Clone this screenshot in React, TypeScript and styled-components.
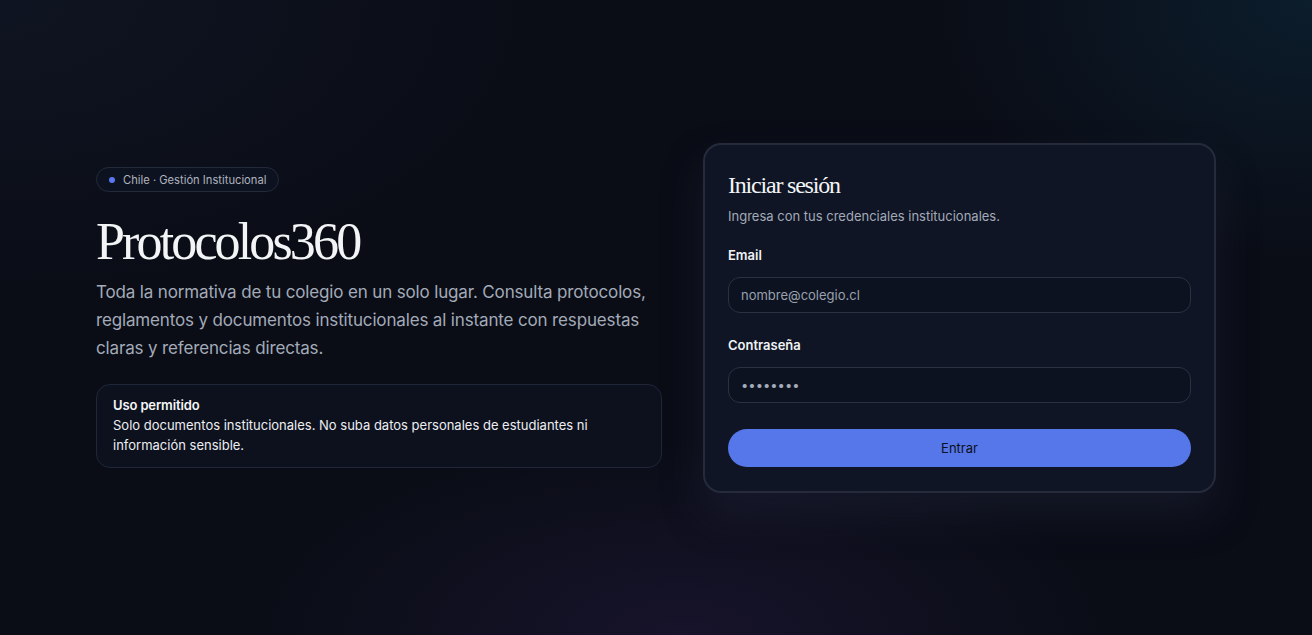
import React from "react";
import styled, { createGlobalStyle } from "styled-components";

const Global = createGlobalStyle`
  * { box-sizing: border-box; }
  html, body { margin: 0; padding: 0; }
  body {
    font-family: Inter, "Noto Sans", "Liberation Sans", sans-serif;
    background: #0a0d16;
    color: #e5e7eb;
  }
`;

const Page = styled.main`
  min-height: 100vh;
  display: flex;
  align-items: center;
  justify-content: center;
  padding: 0 96px;
  background:
    radial-gradient(ellipse 520px 360px at 100% 0%, rgba(12, 34, 50, 0.75), transparent 72%),
    radial-gradient(ellipse 560px 260px at 52% 100%, rgba(26, 21, 48, 0.8), transparent 75%),
    radial-gradient(ellipse 760px 420px at 0% 0%, rgba(18, 24, 40, 0.65), transparent 70%),
    #0a0d16;
`;

const Layout = styled.div`
  width: 100%;
  max-width: 1120px;
  display: grid;
  grid-template-columns: 566px 1fr;
  gap: 41px;
  align-items: center;
`;

const Intro = styled.section`
  display: flex;
  flex-direction: column;
  align-items: flex-start;
`;

const Badge = styled.span`
  display: inline-flex;
  align-items: center;
  gap: 8px;
  height: 25px;
  padding: 0 12px;
  border: 1px solid #232a3a;
  border-radius: 999px;
  background: #0d1220;
  font-size: 11.2px;
  color: #aeb3be;
`;

const Dot = styled.span`
  width: 6px;
  height: 6px;
  border-radius: 50%;
  background: #5a78ee;
`;

const Title = styled.h1`
  margin: 20px 0 0;
  font-family: "Liberation Serif", "DejaVu Serif", serif;
  font-weight: 400;
  font-size: 52px;
  line-height: 60px;
  letter-spacing: -0.055em;
  color: #f3f4f6;
`;

const Lead = styled.p`
  margin: 6px 0 0;
  font-size: 17px;
  line-height: 28px;
  letter-spacing: -0.15px;
  color: #a3aab8;
  max-width: 566px;
`;

const Notice = styled.div`
  margin-top: 22px;
  width: 100%;
  padding: 10px 16px 12px;
  border: 1px solid #20273a;
  border-radius: 14px;
  background: #0d111d;
  font-size: 13px;
  line-height: 20px;
  color: #eceef2;
`;

const NoticeTitle = styled.div`
  font-weight: 600;
  letter-spacing: -0.01em;
  color: #f5f6f8;
`;

const Card = styled.section`
  padding: 25px 23px 24px;
  border: 2px solid #252b3b;
  border-radius: 18px;
  background: #0f1524;
  box-shadow: 0 22px 40px rgba(40, 44, 70, 0.35);
  display: flex;
  flex-direction: column;
`;

const CardTitle = styled.h2`
  margin: 0;
  font-family: "Liberation Serif", "DejaVu Serif", serif;
  font-weight: 400;
  font-size: 24px;
  line-height: 30px;
  letter-spacing: -0.05em;
  color: #f3f4f6;
`;

const CardSub = styled.p`
  margin: 6px 0 0;
  font-size: 13px;
  line-height: 20px;
  color: #a3aab8;
`;

const Field = styled.label<{ $top: number }>`
  display: flex;
  flex-direction: column;
  gap: 12px;
  margin-top: ${(p) => p.$top}px;
`;

const Label = styled.span`
  font-size: 13px;
  line-height: 20px;
  font-weight: 600;
  color: #f1f2f5;
`;

const Input = styled.input`
  height: 36px;
  width: 100%;
  padding: 0 12px;
  border: 1px solid #2a3142;
  border-radius: 12px;
  background: #0d1220;
  font-family: inherit;
  font-size: 13px;
  color: #a3aab8;
  outline: none;
  &::placeholder { color: #9aa1ae; }
`;

const Submit = styled.button`
  margin-top: 26px;
  height: 38px;
  width: 100%;
  border: none;
  border-radius: 999px;
  background: #5577e9;
  font-family: inherit;
  font-size: 13px;
  color: #0c1020;
  cursor: pointer;
`;

export default function App() {
  return (
    <>
      <Global />
      <Page>
        <Layout>
          <Intro>
            <Badge>
              <Dot />
              Chile · Gestión Institucional
            </Badge>
            <Title>Protocolos360</Title>
            <Lead>
              Toda la normativa de tu colegio en un solo lugar. Consulta protocolos,
              reglamentos y documentos institucionales al instante con respuestas
              claras y referencias directas.
            </Lead>
            <Notice>
              <NoticeTitle>Uso permitido</NoticeTitle>
              Solo documentos institucionales. No suba datos personales de estudiantes ni
              información sensible.
            </Notice>
          </Intro>
          <Card>
            <CardTitle>Iniciar sesión</CardTitle>
            <CardSub>Ingresa con tus credenciales institucionales.</CardSub>
            <Field $top={19}>
              <Label>Email</Label>
              <Input type="email" placeholder="nombre@colegio.cl" />
            </Field>
            <Field $top={22}>
              <Label>Contraseña</Label>
              <Input type="password" defaultValue="12345678" />
            </Field>
            <Submit type="button">Entrar</Submit>
          </Card>
        </Layout>
      </Page>
    </>
  );
}
